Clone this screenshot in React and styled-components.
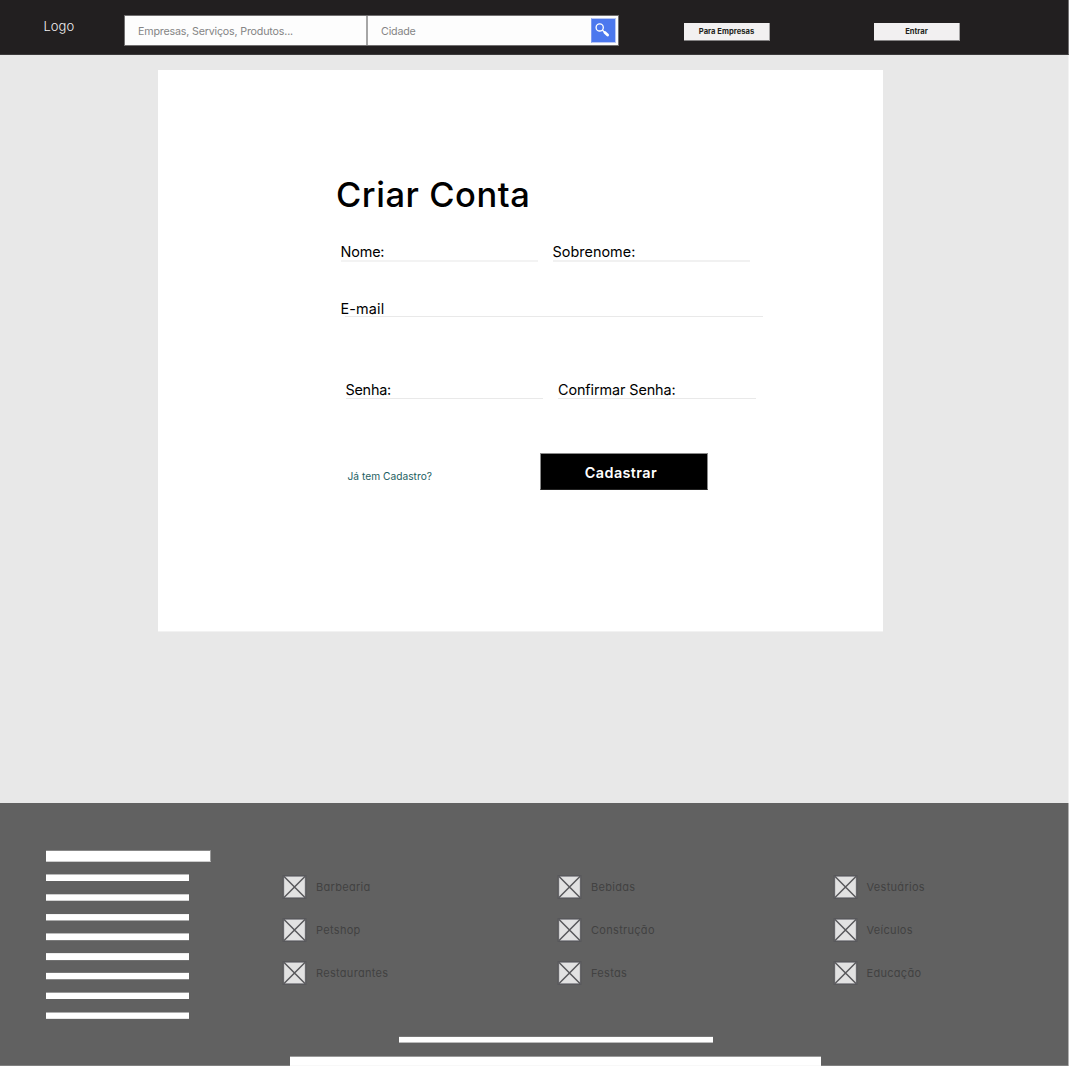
import React from "react";
import styled, { createGlobalStyle } from "styled-components";

const GlobalStyle = createGlobalStyle`
  * { box-sizing: border-box; }
  body { margin: 0; background: #e8e8e8; overflow: hidden; }
`;

const Page = styled.div`
  width: 1069px;
  height: 1066px;
  display: flex;
  flex-direction: column;
  background: #e8e8e8;
  font-family: Inter, "Liberation Sans", sans-serif;
  overflow: hidden;
`;

const Label = styled.span`
  display: block;
  white-space: nowrap;
  font-size: ${(p) => p.$size}px;
  font-weight: ${(p) => p.$weight || 400};
  line-height: ${(p) => p.$line || 16}px;
  letter-spacing: ${(p) => p.$spacing || 0}px;
  color: ${(p) => p.$color || "#000"};
`;

const Header = styled.header`
  height: 55px;
  flex: none;
  display: flex;
  align-items: flex-start;
  background: #221f20;
  border-bottom: 1px solid #3c3a3b;
  border-right: 1px solid #747273;
`;

const Logo = styled.div`
  width: 124px;
  padding: 18px 0 0 43.5px;
`;

const SearchBar = styled.div`
  width: 495px;
  height: 31px;
  margin-top: 15px;
  display: flex;
  background: #fdfdfd;
  border: 1px solid #716f70;
`;

const SearchField = styled.div`
  width: ${(p) => p.$width}px;
  padding: 8px 0 0 13px;
  border-right: ${(p) => (p.$divided ? "2px solid #a6a6a6" : "none")};
`;

const SearchButton = styled.button`
  width: 25px;
  height: 25px;
  margin: 2px 0 0;
  padding: 0;
  border: 1px solid #b9c8f7;
  border-left-color: #7d9bf2;
  background: #4c78ee;
  display: flex;
`;

const HeaderButton = styled.button`
  width: 86px;
  height: 18px;
  margin: 23px 0 0 ${(p) => p.$gap}px;
  padding: 0;
  border: 0;
  border-right: 1px solid #a5a3a4;
  border-bottom: 1px solid #858384;
  background: #f2f0f1;
  font-family: inherit;
  display: flex;
  justify-content: center;
  align-items: center;
`;

const Main = styled.main`
  height: 748px;
  flex: none;
  padding: 15px 0 0 158px;
  border-right: 1px solid #f3f3f3;
`;

const Card = styled.form`
  width: 725px;
  height: 562px;
  padding: 101px 0 0 178px;
  background: #fff;
  border-bottom: 1px solid #f2f2f2;
`;

const Title = styled.h1`
  margin: 0;
  height: 48px;
  font-size: 34.5px;
  line-height: 48px;
  font-weight: 500;
  letter-spacing: 0.55px;
  white-space: nowrap;
`;

const Fields = styled.div`
  display: flex;
  gap: 15px;
  margin: ${(p) => p.$top}px 0 0 ${(p) => p.$left}px;
`;

const Field = styled.div`
  width: ${(p) => p.$width}px;
  height: ${(p) => p.$height || 18}px;
`;

const Underline = styled.div`
  height: ${(p) => p.$thick || 1}px;
  margin-left: ${(p) => p.$inset || 0}px;
  background: ${(p) => p.$color || "#e9e9e9"};
`;

const Actions = styled.div`
  display: flex;
  align-items: flex-start;
  margin-top: 54px;
`;

const LoginLink = styled.a`
  width: 204px;
  padding: 15px 0 0 11.5px;
`;

const Submit = styled.button`
  width: 168px;
  height: 37px;
  border: 1px solid #8a8a8a;
  border-bottom-color: #222;
  background: #000;
  font-family: inherit;
  padding: 2px 6px 0 0;
  display: flex;
  justify-content: center;
  align-items: center;
`;

const Footer = styled.footer`
  height: 263px;
  flex: none;
  background: #616161;
  border-right: 1px solid #b1b1b1;
  box-shadow: inset 0 -1px 0 #808080;
  overflow: hidden;
  display: flex;
  flex-direction: column;
`;

const FooterBody = styled.div`
  display: flex;
  height: 216px;
  flex: none;
`;

const BarColumn = styled.div`
  width: 282px;
  padding: 47px 0 0 46px;
`;

const Bar = styled.div`
  width: ${(p) => p.$width}px;
  height: ${(p) => p.$height}px;
  margin: ${(p) => p.$gap}px 0 0 ${(p) => p.$left || 0}px;
  background: #fff;
  border-top: 1px solid ${(p) => p.$top};
  border-bottom: 1px solid ${(p) => p.$bottom};
  border-right: ${(p) => (p.$edge ? `1px solid ${p.$edge}` : "none")};
`;

const Categories = styled.div`
  display: grid;
  grid-template-columns: 275px 275.5px 200px;
  grid-auto-rows: 43px;
  padding-top: 72px;
`;

const Category = styled.div`
  display: flex;
  align-items: flex-start;
  gap: 9px;
`;

const CategoryName = styled(Label)`
  margin-top: 4px;
  font-feature-settings: "cv11" 1;
`;

const navBars = [
  { width: 165, height: 12, gap: 0, top: "#888", bottom: "#ccc", edge: "#999" },
  { width: 143, height: 7, gap: 12, top: "#b8b8b8", bottom: "#fff" },
  { width: 143, height: 7, gap: 13, top: "#cdcdcd", bottom: "#d2d2d2" },
  { width: 143, height: 7, gap: 13, top: "#f4f4f4", bottom: "#acacac" },
  { width: 143, height: 8, gap: 12, top: "#bcbcbc", bottom: "#7c7c7c" },
  { width: 143, height: 8, gap: 12, top: "#ececec", bottom: "#727272" },
  { width: 143, height: 8, gap: 11, top: "#787878", bottom: "#8a8a8a" },
  { width: 143, height: 7, gap: 12, top: "#999", bottom: "#fff" },
  { width: 143, height: 7, gap: 13, top: "#acacac", bottom: "#e8e8e8" },
];

const categories = [
  "Barbearia",
  "Bebidas",
  "Vestuários",
  "Petshop",
  "Construção",
  "Veículos",
  "Restaurantes",
  "Festas",
  "Educação",
];

function SearchIcon() {
  return (
    <svg width="23" height="23" viewBox="0 0 23 23" fill="none" stroke="#fff">
      <circle cx="7.7" cy="8.4" r="3.6" strokeWidth="1.3" />
      <path d="M10.3 11 L12.6 13.2" strokeWidth="1.3" />
      <path d="M12.9 13.4 L15.6 16" strokeWidth="2.8" strokeLinecap="round" />
    </svg>
  );
}

function PlaceholderIcon() {
  return (
    <svg width="25" height="25" viewBox="0 0 25 25">
      <rect x="0.5" y="0" width="24" height="24" fill="#58585b" />
      <rect x="1.8" y="1.3" width="21.4" height="21.4" fill="#a2a2a6" />
      <rect x="2.3" y="1.9" width="20.4" height="20.2" fill="#e2e2e2" />
      <path d="M1.8 1.3 L23.2 22.7 M23.2 1.3 L1.8 22.7" stroke="#58585b" strokeWidth="1.5" />
    </svg>
  );
}

export default function App() {
  return (
    <Page>
      <GlobalStyle />
      <Header>
        <Logo><Label $size={13} $weight={300} $color="#f2f0f1">Logo</Label></Logo>
        <SearchBar>
          <SearchField $width={243} $divided>
            <Label $size={10.7} $spacing={-0.18} $color="#858585">Empresas, Serviços, Produtos...</Label>
          </SearchField>
          <SearchField $width={223}>
            <Label $size={10.7} $spacing={-0.18} $color="#858585">Cidade</Label>
          </SearchField>
          <SearchButton type="button" aria-label="Buscar"><SearchIcon /></SearchButton>
        </SearchBar>
        <HeaderButton type="button" $gap={65}>
          <Label $size={7.6} $weight={700} $spacing={0.02} $color="#221f20">Para Empresas</Label>
        </HeaderButton>
        <HeaderButton type="button" $gap={104}>
          <Label $size={7.6} $weight={700} $spacing={0.02} $color="#221f20">Entrar</Label>
        </HeaderButton>
      </Header>

      <Main>
        <Card>
          <Title>Criar Conta</Title>
          <Fields $top={24} $left={4.5}>
            <Field $width={197}>
              <Label $size={14.4} $line={17} $spacing={-0.15}>Nome:</Label>
              <Underline $thick={2} $color="#f3f3f3" />
            </Field>
            <Field $width={197}>
              <Label $size={14.4} $line={17} $spacing={0.03}>Sobrenome:</Label>
              <Underline $thick={2} $color="#f1f1f1" />
            </Field>
          </Fields>
          <Fields $top={40} $left={4.5}>
            <Field $width={422} $height={16}>
              <Label $size={14.4} $line={15} $spacing={0.15}>E-mail</Label>
              <Underline $inset={4} />
            </Field>
          </Fields>
          <Fields $top={64} $left={9.5}>
            <Field $width={197.5}>
              <Label $size={14.4} $line={17} $spacing={-0.25}>Senha:</Label>
              <Underline />
            </Field>
            <Field $width={197.5}>
              <Label $size={14.4} $line={17} $spacing={-0.1}>Confirmar Senha:</Label>
              <Underline />
            </Field>
          </Fields>
          <Actions>
            <LoginLink>
              <Label $size={10.2} $spacing={0.02} $color="#1d5e62">Já tem Cadastro?</Label>
            </LoginLink>
            <Submit type="button">
              <Label $size={14.4} $weight={600} $spacing={0.4} $color="#fff">Cadastrar</Label>
            </Submit>
          </Actions>
        </Card>
      </Main>

      <Footer>
        <FooterBody>
          <BarColumn>
            {navBars.map((b, i) => (
              <Bar
                key={i}
                $width={b.width}
                $height={b.height}
                $gap={b.gap}
                $top={b.top}
                $bottom={b.bottom}
                $edge={b.edge}
              />
            ))}
          </BarColumn>
          <Categories>
            {categories.map((name) => (
              <Category key={name}>
                <PlaceholderIcon />
                <CategoryName $size={11} $spacing={0.3} $color="#424242">{name}</CategoryName>
              </Category>
            ))}
          </Categories>
        </FooterBody>
        <Bar $width={314} $height={7} $gap={17} $left={399} $top="#777" $bottom="#bbb" />
        <Bar $width={531} $height={10} $gap={13} $left={290} $top="#999" $bottom="#f8f8f8" />
      </Footer>
    </Page>
  );
}
